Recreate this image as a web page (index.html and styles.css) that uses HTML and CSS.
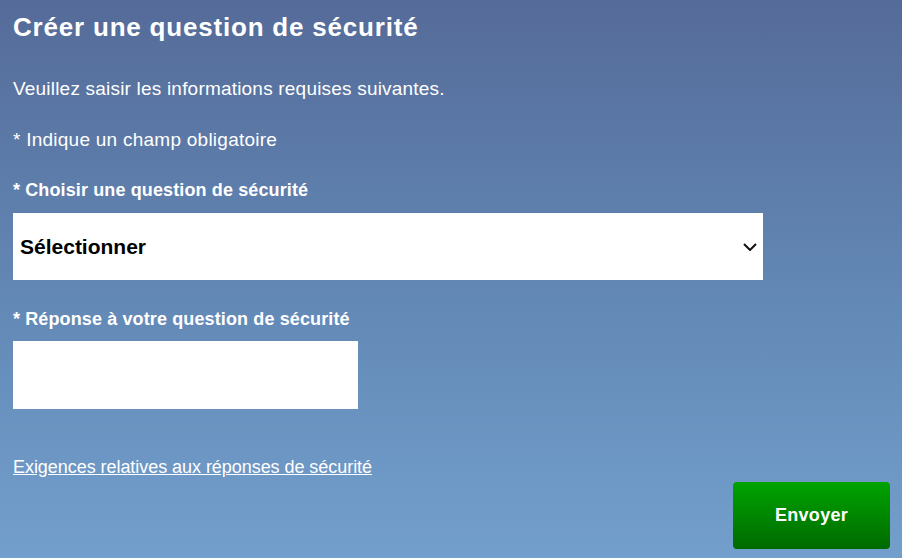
FILE: index.html
```html
<!DOCTYPE html>
<html lang="fr">
  <head>
    <meta charset="UTF-8" />
    <title>Créer une question de sécurité</title>
    <link rel="stylesheet" href="styles.css">
  </head>
  <body>
    <div class="page">
      <h1 class="title">Créer une question de sécurité</h1>
      <p class="intro">Veuillez saisir les informations requises suivantes.</p>
      <p class="note">* Indique un champ obligatoire</p>

      <form class="question-form">
        <label class="field-label" for="question">* Choisir une question de sécurité</label>
        <div class="select-box" id="question">
          <span class="select-text">Sélectionner</span>
          <svg class="chevron" width="14" height="8" viewBox="0 0 14 8">
            <path d="M1 1 L7 7 L13 1" fill="none" stroke="#111" stroke-width="2" />
          </svg>
        </div>

        <label class="field-label answer-label" for="answer">* Réponse à votre question de sécurité</label>
        <input class="answer-input" type="text" id="answer" />

        <a class="req-link" href="#">Exigences relatives aux réponses de sécurité</a>

        <div class="actions">
          <button class="send-button" type="submit">Envoyer</button>
        </div>
      </form>
    </div>
  </body>
</html>
```

FILE: styles.css
```css
html,
body {
  height: 100%;
  margin: 0;
}
body {
  font-family: "Liberation Sans", Arial, sans-serif;
  color: #fff;
  background: linear-gradient(180deg, #556b99 0%, #6389b6 55%, #739fcd 100%);
}
.page {
  padding: 12px 12px 0 13px;
}
/* Headings and intro text */
.title {
  margin: 0;
  font-size: 26px;
  line-height: 30px;
  font-weight: bold;
  letter-spacing: 0.8px;
}
.intro {
  margin: 36px 0 0;
  font-size: 19px;
  line-height: 22px;
  letter-spacing: 0.2px;
}
.note {
  margin: 29px 0 0;
  font-size: 19px;
  line-height: 22px;
  letter-spacing: 0.25px;
}
/* Form fields */
.question-form {
  display: flex;
  flex-direction: column;
  align-items: flex-start;
}
.field-label {
  margin-top: 28px;
  font-size: 18px;
  line-height: 22px;
  font-weight: bold;
  letter-spacing: 0.12px;
}
.select-box {
  box-sizing: border-box;
  width: 750px;
  height: 67px;
  margin-top: 12px;
  padding: 0 6px 0 7px;
  background: #fff;
  display: flex;
  align-items: center;
  justify-content: space-between;
}
.select-text {
  color: #000;
  font-size: 21px;
  font-weight: bold;
}
.answer-input {
  box-sizing: border-box;
  width: 345px;
  height: 68px;
  margin-top: 11px;
  border: none;
  background: #fff;
  outline: none;
}
.req-link {
  margin-top: 47px;
  color: #fff;
  font-size: 18px;
  line-height: 22px;
  letter-spacing: -0.05px;
}
/* Submit button */
.actions {
  align-self: stretch;
  display: flex;
  justify-content: flex-end;
  margin-top: 4px;
}
.send-button {
  width: 157px;
  height: 67px;
  border: none;
  border-radius: 4px;
  background: linear-gradient(180deg, #00a300 0%, #006a00 100%);
  color: #fff;
  font-family: "Liberation Sans", Arial, sans-serif;
  font-size: 18px;
  font-weight: bold;
  letter-spacing: 0.3px;
  cursor: pointer;
}
```
